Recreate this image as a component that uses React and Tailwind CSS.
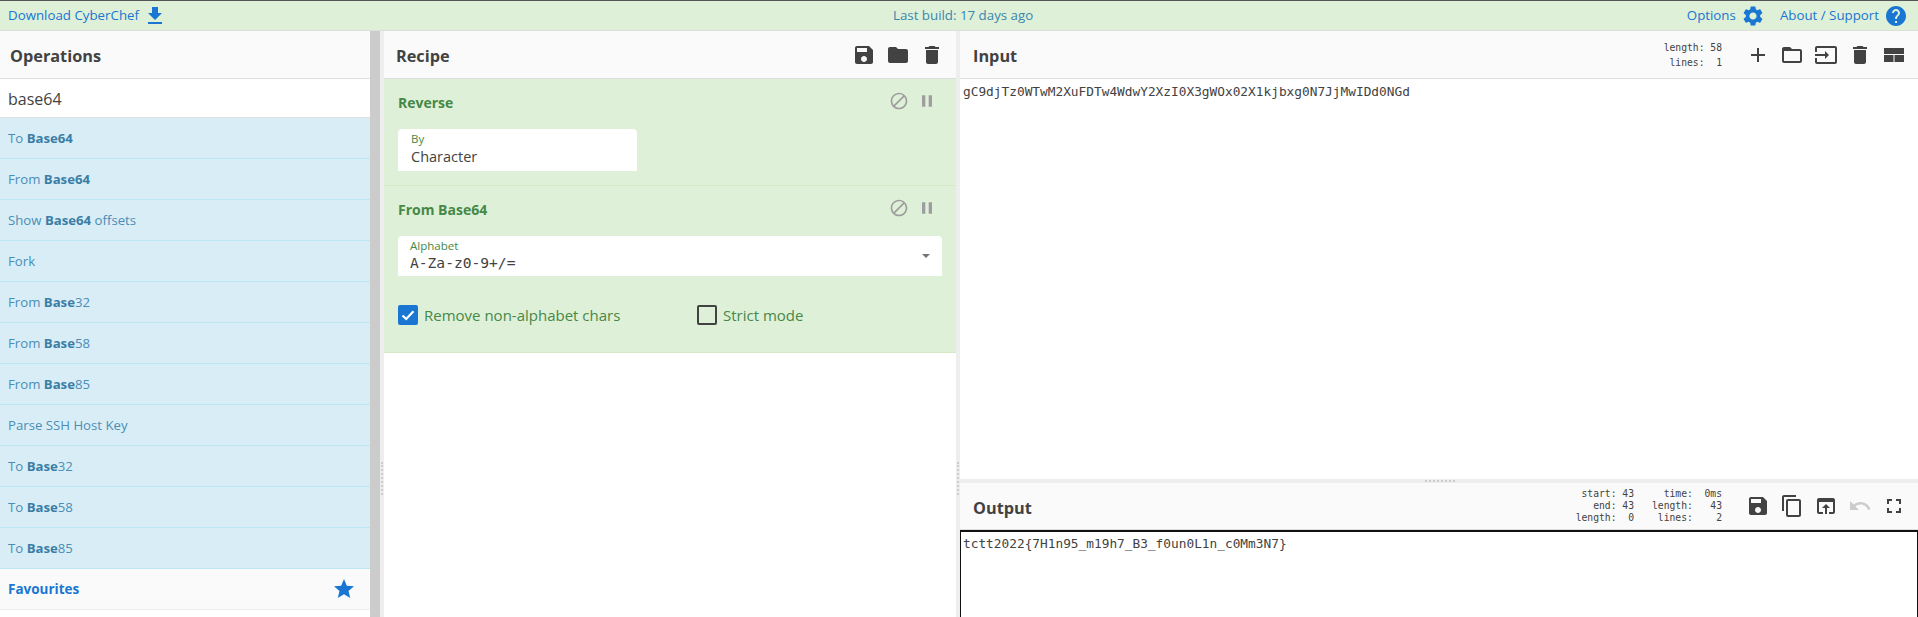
const sans = "font-['Open_Sans',sans-serif]";

const icons = {
  save: "M17 3H5c-1.11 0-2 .9-2 2v14c0 1.1.89 2 2 2h14c1.1 0 2-.9 2-2V7l-4-4zm-5 16c-1.66 0-3-1.34-3-3s1.34-3 3-3 3 1.34 3 3-1.34 3-3 3zm3-10H5V5h10v4z",
  folder: "M10 4H4c-1.1 0-1.99.9-1.99 2L2 18c0 1.1.9 2 2 2h16c1.1 0 2-.9 2-2V8c0-1.1-.9-2-2-2h-8l-2-2z",
  trash: "M6 19c0 1.1.9 2 2 2h8c1.1 0 2-.9 2-2V7H6v12zM19 4h-3.5l-1-1h-5l-1 1H5v2h14V4z",
  add: "M19 13h-6v6h-2v-6H5v-2h6V5h2v6h6v2z",
  folderOpen: "M20 6h-8l-2-2H4c-1.1 0-1.99.9-1.99 2L2 18c0 1.1.9 2 2 2h16c1.1 0 2-.9 2-2V8c0-1.1-.9-2-2-2zm0 12H4V8h16v10z",
  input: "M21 3.01H3c-1.1 0-2 .9-2 2V9h2V4.99h18v14.03H3V15H1v4.01c0 1.1.9 1.98 2 1.98h18c1.1 0 2-.88 2-1.98v-14c0-1.11-.9-2-2-2zM11 16l4-4-4-4v3H1v2h10v3z",
  layout: "M2 5h20v6H2zM2 12h9.5v7H2zM12.5 12H22v7h-9.5z",
  download: "M19 9h-4V3H9v6H5l7 7 7-7zM5 18v2h14v-2H5z",
  gear: "M19.14 12.94c.04-.3.06-.61.06-.94 0-.32-.02-.64-.07-.94l2.03-1.58c.18-.14.23-.41.12-.61l-1.92-3.32c-.12-.22-.37-.29-.59-.22l-2.39.96c-.5-.38-1.03-.7-1.62-.94l-.36-2.54c-.04-.24-.24-.41-.48-.41h-3.84c-.24 0-.43.17-.47.41l-.36 2.54c-.59.24-1.13.57-1.62.94l-2.39-.96c-.22-.08-.47 0-.59.22L2.74 8.87c-.12.21-.08.47.12.61l2.03 1.58c-.05.3-.09.63-.09.94s.02.64.07.94l-2.03 1.58c-.18.14-.23.41-.12.61l1.92 3.32c.12.22.37.29.59.22l2.39-.96c.5.38 1.03.7 1.62.94l.36 2.54c.05.24.24.41.48.41h3.84c.24 0 .44-.17.47-.41l.36-2.54c.59-.24 1.13-.56 1.62-.94l2.39.96c.22.08.47 0 .59-.22l1.92-3.32c.12-.22.07-.47-.12-.61l-2.01-1.58zM12 15.6c-1.98 0-3.6-1.62-3.6-3.6s1.62-3.6 3.6-3.6 3.6 1.62 3.6 3.6-1.62 3.6-3.6 3.6z",
  help: "M12 2C6.48 2 2 6.48 2 12s4.48 10 10 10 10-4.48 10-10S17.52 2 12 2zm1 17h-2v-2h2v2zm2.07-7.75l-.9.92C13.45 12.9 13 13.5 13 15h-2v-.5c0-1.1.45-2.1 1.17-2.83l1.24-1.26c.37-.36.59-.86.59-1.41 0-1.1-.9-2-2-2s-2 .9-2 2H8c0-2.21 1.79-4 4-4s4 1.79 4 4c0 .88-.36 1.68-.93 2.25z",
  star: "M12 17.27L18.18 21l-1.64-7.03L22 9.24l-7.19-.61L12 2 9.19 8.63 2 9.24l5.46 4.73L5.82 21z",
  block: "M12 2C6.48 2 2 6.48 2 12s4.48 10 10 10 10-4.48 10-10S17.52 2 12 2zM4 12c0-4.42 3.58-8 8-8 1.85 0 3.55.63 4.9 1.69L5.69 16.9C4.63 15.55 4 13.85 4 12zm8 8c-1.85 0-3.55-.63-4.9-1.69L18.31 7.1C19.37 8.45 20 10.15 20 12c0 4.42-3.58 8-8 8z",
  pause: "M6 19h4V5H6v14zm8-14v14h4V5h-4z",
  copy: "M16 1H4c-1.1 0-2 .9-2 2v14h2V3h12V1zm3 4H8c-1.1 0-2 .9-2 2v14c0 1.1.9 2 2 2h11c1.1 0 2-.9 2-2V7c0-1.1-.9-2-2-2zm0 16H8V7h11v14z",
  openIn: "M19 4H5c-1.11 0-2 .9-2 2v12c0 1.1.89 2 2 2h4v-2H5V8h14v10h-4v2h4c1.1 0 2-.9 2-2V6c0-1.1-.89-2-2-2zm-7 6l-4 4h3v6h2v-6h3l-4-4z",
  undo: "M12.5 8c-2.65 0-5.05.99-6.9 2.6L2 7v9h9l-3.62-3.62c1.39-1.16 3.16-1.88 5.12-1.88 3.54 0 6.55 2.31 7.6 5.5l2.37-.78C21.08 11.03 17.15 8 12.5 8z",
  fullscreen: "M7 14H5v5h5v-2H7v-3zm-2-4h2V7h3V5H5v5zm12 7h-3v2h5v-5h-2v3zM14 5v2h3v3h2V5h-5z",
};

function Icon({ name, size = 24, className = "" }) {
  return (
    <svg width={size} height={size} viewBox="0 0 24 24" fill="currentColor" className={"shrink-0 " + className}>
      <path d={icons[name]} />
    </svg>
  );
}

// [before, bold, after]
const operations = [
  ["To ", "Base64", ""],
  ["From ", "Base64", ""],
  ["Show ", "Base64", " offsets"],
  ["Fork", "", ""],
  ["From ", "Base", "32"],
  ["From ", "Base", "58"],
  ["From ", "Base", "85"],
  ["Parse SSH Host Key", "", ""],
  ["To ", "Base", "32"],
  ["To ", "Base", "58"],
  ["To ", "Base", "85"],
];

function Title({ children }) {
  return <h2 className="pt-[4px] text-[16.3px] font-bold text-[#424242]">{children}</h2>;
}

function IconRow({ names }) {
  return (
    <div className="flex items-center gap-[10px] text-[#424242]">
      {names.map((n) => (
        <Icon key={n} name={n} />
      ))}
    </div>
  );
}

function OpTitle({ title }) {
  return (
    <div className="flex items-center justify-between">
      <span className="text-[14px] font-bold text-[#468847]">{title}</span>
      <div className="-mt-[4px] mr-[5px] flex items-center gap-[8px] text-[#9e9e9e]">
        <Icon name="block" size={20} />
        <Icon name="pause" size={20} />
      </div>
    </div>
  );
}

function Stats({ lines, className = "" }) {
  return (
    <div className={"whitespace-pre text-right font-['DejaVu_Sans_Mono',monospace] text-[9.7px] text-[#424242] " + className}>
      {lines.map((l, i) => (
        <div key={i}>{l}</div>
      ))}
    </div>
  );
}

export default function App() {
  return (
    <div className={"flex h-[617px] w-[1918px] flex-col overflow-hidden border-t border-[#555] bg-white " + sans}>
      <div className="relative flex h-[30px] shrink-0 items-center justify-between border-b border-[#ddd] bg-[#dff0d8] pl-2 pr-[10px] text-[13.3px] text-[#1976d2]">
        <div className="flex items-center gap-[4px]">
          <span>Download CyberChef</span>
          <Icon name="download" size={24} />
        </div>
        <span className="absolute left-[893px] top-[5px] text-[13.3px] text-[#3a87ad]">Last build: 17 days ago</span>
        <div className="flex items-center">
          <span>Options</span>
          <Icon name="gear" size={24} className="ml-[5px]" />
          <span className="ml-[15px]">About / Support</span>
          <Icon name="help" size={24} className="ml-[5px]" />
        </div>
      </div>

      <div className="flex min-h-0 flex-1">
        {/* operations */}
        <div className="flex w-[370px] shrink-0 flex-col">
          <div className="flex h-[48px] shrink-0 items-center border-b border-[#ddd] bg-[#fafafa] pl-[10px]">
            <Title>Operations</Title>
          </div>
          <div className="flex h-[39px] shrink-0 items-center border-b border-[#ddd] bg-white pl-2 pt-[2px] text-[16px] text-[#424242]">base64</div>
          {operations.map((op, i) => (
            <div key={i} className="flex h-[41px] shrink-0 items-center border-b border-[#bce8f1] bg-[#d9edf7] pl-2 pt-[2px] text-[13.2px] text-[#4a8db5]">
              <span className="whitespace-pre">
                {op[0]}
                <b className="text-[#3a7ea6]">{op[1]}</b>
                {op[2]}
              </span>
            </div>
          ))}
          <div className="flex h-[41px] shrink-0 items-center justify-between border-b border-[#eee] bg-[#fafafa] pl-2 pr-[14px] text-[13.5px] font-bold text-[#1976d2]">
            <span>Favourites</span>
            <Icon name="star" size={24} />
          </div>
        </div>
        <div className="w-[10px] shrink-0 bg-[#ccc]" />
        <div className="relative w-[4px] shrink-0 bg-[#eee]">
          <div className="absolute left-[1px] top-[431px] h-[33px] w-[2px] border-l-2 border-dotted border-[#ccc]" />
        </div>

        {/* recipe */}
        <div className="flex w-[572px] shrink-0 flex-col">
          <div className="flex h-[48px] shrink-0 items-center justify-between border-b border-[#ddd] bg-[#fafafa] pl-[12px] pr-[12px]">
            <Title>Recipe</Title>
            <IconRow names={["save", "folder", "trash"]} />
          </div>
          <div className="h-[107px] shrink-0 border-b border-[#d6e9c6] bg-[#dff0d8] px-[14px] pt-[13px]">
            <OpTitle title="Reverse" />
            <div className="mt-[16px] h-[42px] w-[239px] rounded-t-[4px] bg-white pl-[13px] pt-[3px]">
              <div className="text-[11.5px] leading-[14px] text-[#468847]">By</div>
              <div className="pt-[1px] text-[14.5px] leading-[20px] text-[#424242]">Character</div>
            </div>
          </div>
          <div className="h-[167px] shrink-0 border-b border-[#d6e9c6] bg-[#dff0d8] px-[14px] pt-[13px]">
            <OpTitle title="From Base64" />
            <div className="relative mt-[16px] h-[40px] w-[544px] rounded-t-[4px] bg-white pl-[12px] pt-[3px]">
              <div className="text-[11.5px] leading-[14px] text-[#468847]">Alphabet</div>
              <div className="font-['DejaVu_Sans_Mono',monospace] text-[14.6px] leading-[20px] text-[#424242]">A-Za-z0-9+/=</div>
              <div className="absolute right-[12px] top-[18px] h-0 w-0 border-x-[4px] border-t-[4px] border-x-transparent border-t-[#757575]" />
            </div>
            <div className="mt-[28px] flex items-center">
              <div className="flex w-[299px] items-center gap-[6px]">
                <div className="flex h-[20px] w-[20px] items-center justify-center rounded-[2px] bg-[#1976d2] text-white">
                  <svg width="14" height="14" viewBox="0 0 14 14" fill="none" stroke="currentColor" strokeWidth="2.2">
                    <path d="M1.5 7.5 L5.2 11 L12.5 3.2" />
                  </svg>
                </div>
                <span className="text-[15px] text-[#468847]">Remove non-alphabet chars</span>
              </div>
              <div className="flex items-center gap-[6px]">
                <div className="h-[20px] w-[20px] rounded-[2px] border-2 border-[#424242]" />
                <span className="text-[15px] text-[#468847]">Strict mode</span>
              </div>
            </div>
          </div>
        </div>
        <div className="relative w-[4px] shrink-0 bg-[#eee]">
          <div className="absolute left-[1px] top-[431px] h-[33px] w-[2px] border-l-2 border-dotted border-[#ccc]" />
        </div>

        {/* input + output */}
        <div className="flex min-w-0 flex-1 flex-col">
          <div className="flex h-[48px] shrink-0 items-center justify-between border-b border-[#ddd] bg-[#fafafa] pl-[13px] pr-[12px]">
            <Title>Input</Title>
            <div className="flex items-center">
              <Stats lines={["length: 58", "lines:  1"]} className="mr-[24px] leading-[15px]" />
              <IconRow names={["add", "folderOpen", "input", "trash", "layout"]} />
            </div>
          </div>
          <div className="h-[400px] shrink-0 whitespace-pre bg-white pl-[3px] pt-[4px] font-['DejaVu_Sans_Mono',monospace] text-[12.8px] leading-[18px] text-[#424242]">
            gC9djTz0WTwM2XuFDTw4WdwY2XzI0X3gWOx02X1kjbxg0N7JjMwIDd0NGd
          </div>
          <div className="relative h-[4px] shrink-0 bg-[#eee]">
            <div className="absolute left-[465px] top-[1px] h-[2px] w-[30px] border-t-2 border-dotted border-[#ccc]" />
          </div>
          <div className="flex h-[47px] shrink-0 items-center justify-between border-b border-[#ddd] bg-[#fafafa] pl-[13px] pr-[12px]">
            <Title>Output</Title>
            <div className="flex items-center">
              <Stats lines={["start: 43", "end: 43", "length:  0"]} className="mr-[18px] leading-[12px]" />
              <Stats lines={["time:  0ms", "length:   43", "lines:    2"]} className="mr-[24px] leading-[12px]" />
              <div className="flex items-center gap-[10px] text-[#424242]">
                <Icon name="save" />
                <Icon name="copy" />
                <Icon name="openIn" />
                <Icon name="undo" className="text-[#ccc]" />
                <Icon name="fullscreen" />
              </div>
            </div>
          </div>
          <div className="flex-1 whitespace-pre border-x border-t-2 border-[#111] bg-white pl-[2px] pt-[3px] font-['DejaVu_Sans_Mono',monospace] text-[12.8px] leading-[18px] text-[#424242]">
            {"tctt2022{7H1n95_m19h7_B3_f0un0L1n_c0Mm3N7}"}
          </div>
        </div>
      </div>
    </div>
  );
}
